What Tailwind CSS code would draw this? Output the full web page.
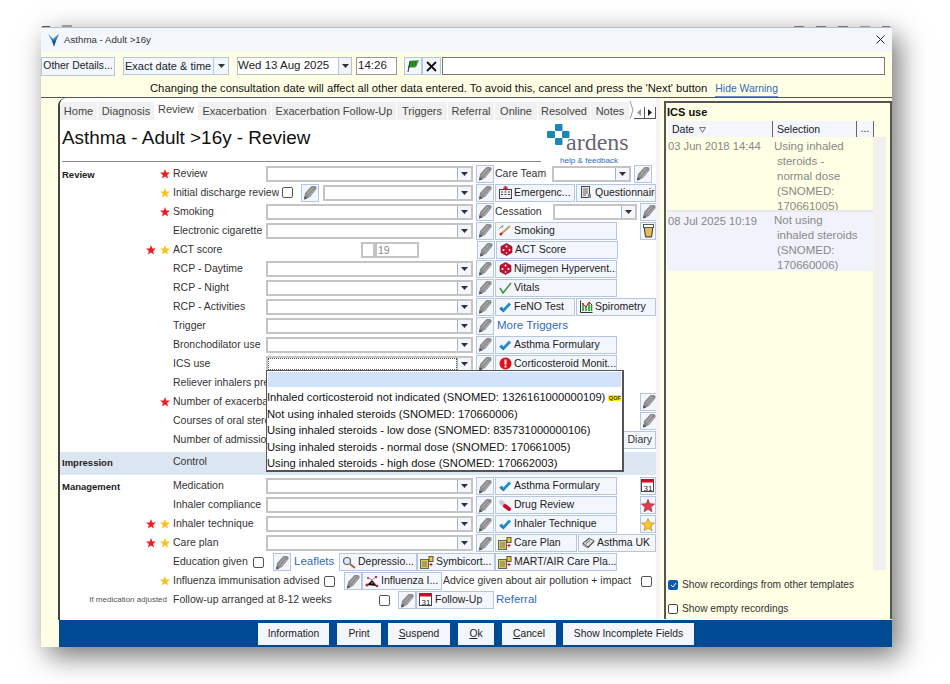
<!DOCTYPE html>
<html lang="en">
<head>
  <meta charset="UTF-8" />
  <title>Asthma - Adult >16y</title>
  <script src="https://cdn.jsdelivr.net/npm/@tailwindcss/browser@4"></script>
</head>
<body class="bg-white font-['Liberation_Sans',sans-serif] text-[10.5px] text-[#333]">
  <div class="w-[950px] h-[684px] pt-[25px] pl-[41px] overflow-hidden">
    <!-- Bits of the desktop showing above the window -->
    <div class="w-[851px] h-[2px] flex items-end">
      <span class="w-[8px] h-[1px] ml-[1px] bg-[#555]"></span>
      <span class="w-[10px] h-[2px] ml-[12px] bg-[#999]"></span>
      <span class="w-[10px] h-[1px] ml-auto bg-[#777]"></span>
      <span class="w-[10px] h-[1px] ml-[12px] bg-[#777]"></span>
      <span class="w-[10px] h-[1px] ml-[12px] bg-[#777]"></span>
      <span class="w-[10px] h-[1px] ml-[12px] bg-[#999]"></span>
      <span class="w-[8px] h-[1px] ml-[12px] mr-[2px] bg-[#777]"></span>
    </div>
    <div class="w-[851px] h-[620px] flex flex-col bg-[#ffffe6] shadow-[7px_9px_26px_rgba(0,0,0,0.55)] border-t border-[#bbb]">

      <!-- Title bar -->
      <div class="h-[24px] shrink-0 bg-[#f3f6fb] flex items-center pl-[6px] pr-[7px]">
        <svg width="14" height="15" viewBox="0 0 14 15"><path d="M1 1l5 5 6-5-3 7-2 6-2-6z" fill="#2f7fc4"/><path d="M5 7l2 1 2-1-2 6z" fill="#16508c"/></svg>
        <span class="ml-[3px] text-[9.7px] text-[#333]">Asthma - Adult &gt;16y</span>
        <svg class="ml-auto -mt-[2px]" width="9" height="9" viewBox="0 0 9 9"><path d="M0.5 0.5l8 8M8.5 0.5l-8 8" stroke="#222" stroke-width="1"/></svg>
      </div>

      <!-- Date toolbar -->
      <div class="h-[23px] shrink-0 flex items-center pt-[5px] text-[11.5px] text-[#222]">
        <div class="w-[74px] h-[19px] bg-[#f3f7ff] border border-[#b4c6e0] flex items-center justify-center text-[10.4px] whitespace-nowrap">Other Details...</div>
        <div class="ml-[8px] w-[106px] h-[18px] bg-[#f3f7ff] border border-[#b4c6e0] flex items-center pl-[1px] whitespace-nowrap text-[11px]">Exact date &amp; time
          <span class="ml-auto w-[15px] h-full border-l border-[#b4c6e0] flex items-center justify-center"><svg width="7" height="4"><path d="M0 0h7L3.5 4z" fill="#333"/></svg></span>
        </div>
        <div class="ml-[8px] w-[115px] h-[18px] bg-white border border-[#b8c0cc] flex items-center whitespace-nowrap">Wed 13 Aug 2025
          <span class="ml-auto w-[13px] h-full bg-[#f0f4fb] border-l border-[#b4c6e0] flex items-center justify-center"><svg width="7" height="4"><path d="M0 0h7L3.5 4z" fill="#333"/></svg></span>
        </div>
        <div class="ml-[4px] w-[41px] h-[18px] bg-white border border-[#999] flex items-center pl-[1px]">14:26</div>
        <div class="ml-[7px] w-[18px] h-[18px] bg-[#f3f7ff] border border-[#b4c6e0] flex items-center justify-center">
          <svg width="14" height="14" viewBox="0 0 14 14"><path d="M4 2c3-1 5 0 9-1l-3 7c-3 1-5 0-8 1z" fill="#2f9428"/><path d="M6 3l1 4M9 2l1 4" stroke="#0f5a10" stroke-width="0.7"/><path d="M4 2L2 13" stroke="#333" stroke-width="1"/></svg>
        </div>
        <div class="w-[19px] h-[18px] bg-[#f3f7ff] border border-[#b4c6e0] flex items-center justify-center">
          <svg width="11" height="11" viewBox="0 0 11 11"><path d="M1 1l9 9M10 1l-9 9" stroke="#111" stroke-width="1.8"/></svg>
        </div>
        <div class="ml-[1px] w-[443px] h-[18px] bg-white border border-[#777]"></div>
      </div>

      <!-- Warning -->
      <div class="h-[22px] shrink-0 flex items-center pl-[109px] pt-[5px] text-[11.25px] text-[#111]">
        <span class="whitespace-nowrap">Changing the consultation date will affect all other data entered. To avoid this, cancel and press the 'Next' button</span>
        <span class="ml-[8px] mt-[1px] text-[#2f6bc0] text-[10.4px] border-b border-[#5c8fd6] whitespace-nowrap">Hide Warning</span>
      </div>

      <!-- Main -->
      <div class="flex-1 min-h-0 flex border-t border-[#555]">
        <div class="w-[17px] shrink-0"></div>

        <!-- Left form panel -->
        <div class="w-[598px] shrink-0 flex flex-col bg-white border-l-2 border-[#444] rounded-tl-[8px] relative overflow-hidden">
          <div id="tabs" class="h-[20px] mt-[2px] shrink-0 flex items-end text-[#444] text-[11px] bg-white">
            <div class="h-[18px] w-[37px] bg-[#f1f1f1] flex items-center justify-center rounded-tl-[6px]">Home</div>
            <div class="h-[18px] w-[56px] ml-[1px] bg-[#f1f1f1] flex items-center justify-center">Diagnosis</div>
            <div class="h-[20px] w-[44px] bg-white flex items-center justify-center pb-[2px]">Review</div>
            <div class="h-[18px] w-[73px] bg-[#f1f1f1] flex items-center justify-center">Exacerbation</div>
            <div class="h-[18px] w-[124px] ml-[1px] bg-[#f1f1f1] flex items-center justify-center whitespace-nowrap">Exacerbation Follow-Up</div>
            <div class="h-[18px] w-[50px] ml-[1px] bg-[#f1f1f1] flex items-center justify-center">Triggers</div>
            <div class="h-[18px] w-[46px] ml-[1px] bg-[#f1f1f1] flex items-center justify-center">Referral</div>
            <div class="h-[18px] w-[42px] ml-[1px] bg-[#f1f1f1] flex items-center justify-center">Online</div>
            <div class="h-[18px] w-[52px] ml-[1px] bg-[#f1f1f1] flex items-center justify-center">Resolved</div>
            <div class="h-[18px] w-[38px] ml-[1px] bg-[#f1f1f1] flex items-center justify-center">Notes</div>
            <svg class="mb-[1px]" width="5" height="18" viewBox="0 0 5 18"><path d="M1 0l3 9-3 9" fill="none" stroke="#999"/></svg>
            <div class="h-[12px] w-[22px] mb-[1px] flex border-b border-r border-[#555] text-[#555]">
              <span class="flex-1 flex items-center justify-center border-r border-[#555]"><svg width="4" height="7"><path d="M4 0v7L0 3.5z" fill="#999"/></svg></span>
              <span class="flex-1 flex items-center justify-center"><svg width="4" height="7"><path d="M0 0v7l4-3.5z" fill="#222"/></svg></span>
            </div>
          </div>

          <!-- Heading and logo -->
          <div class="h-[45px] shrink-0 flex relative">
            <div class="w-[479px] ml-[2px] h-[42px] border-b border-[#888] text-[18.9px] text-[#111] pt-[6px] whitespace-nowrap leading-[24px]">Asthma - Adult &gt;16y - Review</div>
            <svg class="absolute left-[487px] top-[4px]" width="23" height="22" viewBox="0 0 23 22"><g fill="#1a87b8"><rect x="8" y="0" width="7.500" height="7" rx="1"/><rect x="0" y="7" width="8" height="7" rx="1"/><rect x="15" y="7" width="7.500" height="7" rx="1"/><rect x="8" y="14" width="7.500" height="7" rx="1"/></g></svg>
            <span class="absolute left-[506px] top-[9px] text-[24px] leading-[26px] text-[#667] font-['Liberation_Serif',serif]">ardens</span>
            <span class="absolute left-[500px] top-[36px] text-[8.1px] leading-[10px] text-[#2f6bc0] whitespace-nowrap">help &amp; feedback</span>
          </div>

          <!-- Form rows, filled in by the script below -->
          <div id="review" class="shrink-0 -mt-[1px]"></div>
          <div id="impression" class="h-[23px] mt-[2.5px] bg-[#dce6f2] flex items-center shrink-0">
            <b class="w-[113px] pl-[2px] text-[9.5px] text-[#222]">Impression</b><span class="-mt-[2px]">Control</span>
          </div>
          <div id="management" class="mt-[2px] shrink-0"></div>

          <!-- ICS use dropdown -->
          <div class="absolute left-[206px] top-[272px] w-[358px] h-[102px] bg-white border border-[#555] border-r-2 border-b-2 text-[11.2px] text-[#111] z-10 pt-[1px] whitespace-nowrap">
            <div class="h-[15px] mx-[1px] bg-[#d3e2fb] mb-[2px]"></div>
            <div class="h-[17px] flex items-center">Inhaled corticosteroid not indicated (SNOMED: 1326161000000109)<span class="ml-[3px] w-[13px] h-[6px] bg-[#fff200] text-[5.500px] leading-[6px] font-bold text-center text-[#333]">QOF</span></div>
            <div class="h-[16.5px] flex items-center">Not using inhaled steroids (SNOMED: 170660006)</div>
            <div class="h-[16.5px] flex items-center">Using inhaled steroids - low dose (SNOMED: 835731000000106)</div>
            <div class="h-[16.5px] flex items-center">Using inhaled steroids - normal dose (SNOMED: 170661005)</div>
            <div class="h-[16.5px] flex items-center">Using inhaled steroids - high dose (SNOMED: 170662003)</div>
          </div>
        </div>

        <div class="w-[4px] shrink-0 bg-[#f4f4f4]"></div>
        <div class="w-[4px] shrink-0"></div>

        <!-- Right history panel -->
        <div class="w-[228px] h-[518px] mt-[3px] flex flex-col border-2 border-[#555] border-b-0 bg-[#ffffe6] text-[#333]">
          <div class="h-[18px] shrink-0 pl-[1px] pt-[1px] font-bold text-[11px] text-[#111]">ICS use</div>
          <div class="h-[16px] shrink-0 flex bg-[#f3f6fc] ml-[2px] mr-[16px] items-center text-[#222]">
            <div class="w-[105px] h-full pl-[4px] pt-[1px] border-r border-[#666] flex items-center gap-[5px]">Date <svg width="7" height="6"><path d="M0.5 0.5h6L3.5 5.5z" fill="none" stroke="#777"/></svg></div>
            <div class="w-[84px] h-full pl-[4px] pt-[1px] border-r border-[#666] flex items-center">Selection</div>
            <div class="flex-1 h-full border-r border-[#666] flex items-center justify-center">...</div>
          </div>
          <div class="h-[433px] shrink-0 flex ml-[1px] text-[#888] text-[11.5px] leading-[15px]">
            <div class="w-[206px]">
              <div class="h-[73px] flex bg-[#ffffe6] overflow-hidden">
                <div class="w-[107px] pl-[1px] pt-[2px] text-[11.2px] whitespace-nowrap">03 Jun 2018 14:44</div>
                <div class="flex-1 pt-[2px]">Using inhaled<br /><span class="pl-[3px]">steroids -</span><br /><span class="pl-[3px]">normal dose</span><br /><span class="pl-[3px]">(SNOMED:</span><br /><span class="pl-[3px]">170661005)</span></div>
              </div>
              <div class="h-[2px] bg-[#e8e8e8]"></div>
              <div class="h-[59px] flex bg-[#f0f3fb] overflow-hidden">
                <div class="w-[107px] pl-[1px] pt-[2px] text-[11.2px] whitespace-nowrap">08 Jul 2025 10:19</div>
                <div class="flex-1 pt-[1px]">Not using<br /><span class="pl-[3px]">inhaled steroids</span><br /><span class="pl-[3px]">(SNOMED:</span><br /><span class="pl-[3px]">170660006)</span></div>
              </div>
            </div>
            <div class="w-[13px] bg-[#f0f0f0]"></div>
          </div>
          <div class="h-[24px] shrink-0 flex items-center pl-[2px] gap-[3px] pt-[6px] text-[10.2px]">
            <span class="w-[10px] h-[10px] bg-[#0a5bb5] rounded-[2px] flex items-center justify-center"><svg width="7" height="6"><path d="M1 3l2 2 3-4" stroke="#fff" fill="none"/></svg></span><span class="ml-[1px]">Show recordings from other templates</span>
          </div>
          <div class="h-[25px] shrink-0 flex items-center pl-[2px] pt-[5px] gap-[3px] text-[10.2px]">
            <span class="w-[10px] h-[10px] bg-white border border-[#444] rounded-[2px]"></span><span class="ml-[1px]">Show empty recordings</span>
          </div>
        </div>
      </div>

      <!-- Action bar -->
      <div class="h-[27px] shrink-0 ml-[18px] bg-[#004a94] flex items-center text-[10.3px] text-[#222] pl-[199px] pt-[1px]">
        <div class="w-[71px] h-[22px] bg-[#f3f6fc] flex items-center justify-center">Information</div>
        <div class="w-[44px] h-[22px] ml-[8px] bg-[#f3f6fc] flex items-center justify-center">Print</div>
        <div class="w-[62px] h-[22px] ml-[7px] bg-[#f3f6fc] flex items-center justify-center"><span><u>S</u>uspend</span></div>
        <div class="w-[36px] h-[22px] ml-[8px] bg-[#f3f6fc] flex items-center justify-center"><span><u>O</u>k</span></div>
        <div class="w-[54px] h-[22px] ml-[8px] bg-[#f3f6fc] flex items-center justify-center"><span><u>C</u>ancel</span></div>
        <div class="w-[131px] h-[22px] ml-[7px] bg-[#f3f6fc] flex items-center justify-center whitespace-nowrap">Show Incomplete Fields</div>
      </div>
    </div>
  </div>

  <script>
    // Small inline icons
    const icon = {
      check: `<svg width="13" height="12" viewBox="0 0 13 12"><path d="M1.500 6.500l3 3 6.500-7" fill="none" stroke="#1f8fd0" stroke-width="2.800"/><path d="M1 7.500l3 3" stroke="#15507a" stroke-width="1"/></svg>`,
      green: `<svg width="13" height="12" viewBox="0 0 13 12"><path d="M1 6l3 5 8-10" fill="none" stroke="#3c9a3c" stroke-width="1.6"/></svg>`,
      dice: `<svg width="13" height="13" viewBox="0 0 13 13"><path d="M6.5 0.5l5.5 3v6l-5.500 3-5.500-3v-6z" fill="#c8102e" stroke="#5a0a14" stroke-width="0.6"/><g fill="#fff"><circle cx="6.5" cy="3.5" r="1"/><circle cx="3.5" cy="7" r="1"/><circle cx="9.5" cy="7" r="1"/><circle cx="6.5" cy="10" r="0.8"/></g></svg>`,
      alert: `<svg width="13" height="13" viewBox="0 0 13 13"><circle cx="6.5" cy="6.5" r="6" fill="#e0101a"/><rect x="5.500" y="2.500" width="2" height="5" fill="#fff"/><rect x="5.500" y="8.500" width="2" height="2" fill="#fff"/></svg>`,
      smoke: `<svg width="14" height="13" viewBox="0 0 14 13"><path d="M2 11L12 2" stroke="#b9a25a" stroke-width="2"/><path d="M2 11l2-2" stroke="#c8102e" stroke-width="2"/><path d="M1 5l3-3M5 1l-1 3" stroke="#777" stroke-width="0.8"/></svg>`,
      hosp: `<svg width="13" height="13" viewBox="0 0 13 13"><rect x="0.5" y="3.5" width="12" height="9" fill="#eef2f8" stroke="#444"/><path d="M5 0.5h3v3H5z" fill="#fff" stroke="#444" stroke-width="0.5"/><path d="M6.500 0.500v4M4.500 2.500h4" stroke="#d01020" stroke-width="1.4"/><path d="M2 6h2M2 8.500h2M9 6h2M9 8.500h2M5.500 6h2M5.500 8.500h2" stroke="#345" stroke-width="1"/></svg>`,
      doc: `<svg width="11" height="13" viewBox="0 0 11 13"><rect x="0.5" y="0.5" width="8" height="11" fill="#e8e8e8" stroke="#444"/><path d="M2 3h5M2 5h5M2 7h5M2 9h3" stroke="#444" stroke-width="0.8"/><rect x="7" y="8" width="3" height="4" fill="#888"/></svg>`,
      spiro: `<svg width="13" height="13" viewBox="0 0 13 13"><path d="M0.500 0.500v12h12" fill="none" stroke="#333"/><path d="M3 11V3M6 11V6M9 11V3M11.500 11V5" stroke="#2a9a2a" stroke-width="1.6"/><path d="M2 3l4 4 3-5 3 3" fill="none" stroke="#d01020"/></svg>`,
      pill: `<svg width="14" height="13" viewBox="0 0 14 13"><path d="M3 3l4 4" stroke="#ccc" stroke-width="4" stroke-linecap="round"/><path d="M7 7l4 3" stroke="#c8102e" stroke-width="4" stroke-linecap="round"/></svg>`,
      plan: `<svg width="14" height="13" viewBox="0 0 14 13"><rect x="0.5" y="3.5" width="8" height="9" fill="#d8c860" stroke="#665"/><path d="M2 6h5M2 8h5M2 10h5" stroke="#665" stroke-width="0.8"/><rect x="9" y="0.5" width="4" height="5" fill="#f4d020" stroke="#554"/><path d="M11 7v3M9.500 8.500h3" stroke="#c8102e"/></svg>`,
      book: `<svg width="13" height="12" viewBox="0 0 13 12"><path d="M1 6l6-5 5 3-6 6z" fill="#ddd" stroke="#555"/><path d="M1 6v2l5 3 6-6V4M3 5l4-3M4 6.500l4-3" fill="none" stroke="#555" stroke-width="0.8"/></svg>`,
      lens: `<svg width="14" height="13" viewBox="0 0 14 13"><circle cx="5" cy="5" r="3.5" fill="#dbe8f7" stroke="#666" stroke-width="1.2"/><path d="M8 8l5 4" stroke="#a56a2a" stroke-width="2"/></svg>`,
      virus: `<svg width="14" height="13" viewBox="0 0 14 13"><path d="M2 10l5-5 5 6M7 5l4-3M7 5L3 3" stroke="#888" stroke-width="0.8"/><g fill="#c8202e"><circle cx="2" cy="10" r="1.5"/><circle cx="12" cy="11" r="1.3"/><circle cx="11" cy="2" r="1.2"/><circle cx="3" cy="3" r="1"/><circle cx="7" cy="8" r="1.2"/></g></svg>`,
      cal: `<svg width="14" height="14" viewBox="0 0 14 14"><rect x="0.5" y="0.5" width="12" height="12" fill="#fff" stroke="#444"/><rect x="0.5" y="0.5" width="12" height="3" fill="#d01020"/><text x="2.5" y="11.5" font-size="8" font-family="Liberation Sans" fill="#223">31</text></svg>`,
      cup: `<svg width="11" height="14" viewBox="0 0 11 14"><path d="M1 2h9l-1.500 11h-6z" fill="#e5b95c" stroke="#333"/><rect x="0.5" y="0.5" width="10" height="3" fill="#fff" stroke="#333" stroke-width="0.8"/></svg>`,
      redstar: `<svg width="15" height="15" viewBox="0 0 15 15"><path d="M7.500 1l2 4.500 5 .5-3.800 3.300 1.100 4.900-4.300-2.600-4.300 2.600 1.100-4.900L.5 6l5-.5z" fill="#d8404e" stroke="#903040" stroke-width="0.7"/></svg>`,
      yellowstar: `<svg width="15" height="15" viewBox="0 0 15 15"><path d="M7.500 1l2 4.500 5 .5-3.800 3.300 1.100 4.900-4.300-2.600-4.300 2.600 1.100-4.900L.5 6l5-.5z" fill="#fcc52c" stroke="#b08820" stroke-width="0.7"/></svg>`,
    };

    const star = (c) => `<svg width="10" height="10" viewBox="0 0 10 10"><path d="M5 0l1.300 3.400 3.700.2-2.900 2.300 1 3.600L5 7.500 1.900 9.500l1-3.600L0 3.600l3.700-.2z" fill="${c}"/></svg>`;
    const red = star("#ee1c25");
    const gold = star("#fcc01e");

    const combo = (w, focused) => `<div class="${w} h-[16px] shrink-0 bg-white border-2 border-[#c4c4c4] flex justify-end">
      ${focused ? `<div class="flex-1 border border-dotted border-[#555]"></div>` : ""}
      <span class="w-[14px] bg-[#f3f6fc] border-l border-[#9db4d6] flex items-center justify-center"><svg width="7" height="4"><path d="M0 0h7L3.5 4z" fill="#333"/></svg></span></div>`;

    const pencil = (cls = "") => `<div class="${cls} w-[18px] h-[18px] shrink-0 bg-[#f3f6fc] border border-[#b4c6e0] flex items-center justify-center">
      <svg width="14" height="15" viewBox="0 0 14 15"><path d="M1 14.500L2 8l6.500-7h3c1.500 0 2.500 1 2 3L7 12z" fill="#8c8c8c"/><path d="M1 14.500l.6-3.500 2.900 2.500z" fill="#555"/><path d="M4 9.500l6-7M6 11l5.500-6.500" stroke="#c8c8c8" stroke-width="0.7"/></svg></div>`;

    const btn = (w, ic, text, cls = "") => `<div class="${w} ${cls} h-[18px] shrink-0 bg-[#f3f6fc] border border-[#b4c6e0] flex items-center pl-[2px] gap-[2px] whitespace-nowrap overflow-hidden text-[#222]"><span class="w-[14px] flex justify-center shrink-0">${ic}</span>${text}</div>`;

    const box = (cls = "") => `<span class="${cls} w-[11px] h-[11px] shrink-0 bg-white border border-[#555] rounded-[2px]"></span>`;

    // section: bold label on the far left, stars: right-aligned marks, then label, then controls
    const row = (section, stars, label, controls, labelW = "w-[93px]") => `
      <div class="h-[19px] flex items-center">
        <b class="w-[85px] pl-[2px] pt-[3px] shrink-0 text-[9.500px] text-[#222]">${section}</b>
        <span class="w-[28px] shrink-0 flex justify-end gap-[4px] pr-[3px]">${stars.join("")}</span>
        <span class="${labelW} shrink-0 overflow-hidden whitespace-nowrap">${label}</span>
        ${controls}
      </div>`;

    const field = (w = "w-[207px]") => combo(w) + pencil("ml-[3px]");
    const main = (ic, text) => field() + btn("w-[122px]", ic, text, "ml-[1px]");
    const extra = (inner) => `<div class="w-[16px] h-[18px] ml-[23px] bg-[#f3f6fc] border border-[#b4c6e0] flex items-center justify-center overflow-hidden shrink-0">${inner}</div>`;
    const far = () => `<div class="ml-auto w-[16px] overflow-hidden shrink-0">${pencil()}</div>`;

    document.getElementById("review").innerHTML = [
      row("Review", [red], "Review", field() + `<span class="w-[57px] ml-[1px] shrink-0 whitespace-nowrap">Care Team</span>` + combo("w-[79px]") + pencil("ml-[3px]")),
      row("", [gold], "Initial discharge review", box("ml-[3px]") + pencil("ml-[8px]") + combo("w-[150px] ml-[4px]") + pencil("ml-[3px]") + btn("w-[80px]", icon.hosp, "Emergenc...", "ml-[1px]") + btn("w-[80px]", icon.doc, "Questionnaire", "ml-[1px]"), "w-[106px]"),
      row("", [red], "Smoking", field() + `<span class="w-[58px] ml-[1px] shrink-0">Cessation</span>` + combo("w-[84px]") + pencil("ml-[3px]")),
      row("", [], "Electronic cigarette", main(icon.smoke, "Smoking") + extra(icon.cup)),
      row("", [red, gold], "ACT score", `<div class="ml-[95px] w-[14px] h-[16px] bg-white border-2 border-[#c4c4c4] shrink-0"></div><div class="w-[44px] h-[16px] bg-white border-2 border-[#c4c4c4] shrink-0 text-[#888] pl-[1px] leading-[12px]">19</div>` + pencil("ml-[58px]") + btn("w-[122px]", icon.dice, "ACT Score", "ml-[1px]")),
      row("", [], "RCP - Daytime", main(icon.dice, "Nijmegen Hypervent...")),
      row("", [], "RCP - Night", main(icon.green, "Vitals")),
      row("", [], "RCP - Activities", field() + btn("w-[80px]", icon.check, "FeNO Test", "ml-[1px]") + btn("w-[80px]", icon.spiro, "Spirometry", "ml-[1px]")),
      row("", [], "Trigger", field() + `<span class="ml-[3px] text-[#2f6bc0] text-[11.5px] whitespace-nowrap">More Triggers</span>`),
      row("", [], "Bronchodilator use", main(icon.check, "Asthma Formulary")),
      row("", [], "ICS use", combo("w-[207px]", true) + pencil("ml-[3px]") + btn("w-[122px]", icon.alert, "Corticosteroid Monit...", "ml-[1px]")),
      row("", [], "Reliever inhalers prescribed", ""),
      row("", [red], "Number of exacerbations", far()),
      row("", [], "Courses of oral steroids", far()),
      row("", [], "Number of admissions", `<div class="ml-auto w-[60px] h-[18px] bg-[#f3f6fc] border border-[#b4c6e0] flex items-center justify-end pr-[3px] whitespace-nowrap overflow-hidden">PEFR Diary</div>`),
    ].join("");

    document.getElementById("management").innerHTML = [
      row("Management", [], "Medication", main(icon.check, "Asthma Formulary") + extra(icon.cal)),
      row("", [], "Inhaler compliance", main(icon.pill, "Drug Review") + extra(icon.redstar)),
      row("", [red, gold], "Inhaler technique", main(icon.check, "Inhaler Technique") + extra(icon.yellowstar)),
      row("", [red, gold], "Care plan", field() + btn("w-[82px]", icon.plan, "Care Plan", "ml-[1px]") + btn("w-[78px]", icon.book, "Asthma UK", "ml-[1px]")),
      row("", [], "Education given", box("-ml-[13px]") + pencil("ml-[9px]") + `<span class="ml-[3px] w-[45px] shrink-0 text-[#2f6bc0] text-[11.5px]">Leaflets</span>` + btn("w-[78px]", icon.lens, "Depressio...") + btn("w-[78px]", icon.plan, "Symbicort...") + btn("w-[122px]", icon.plan, "MART/AIR Care Pla...")),
      row("", [gold], "Influenza immunisation advised", box("-ml-[5px]") + pencil("ml-[9px]") + btn("w-[80px]", icon.virus, "Influenza I...") + `<span class="ml-[1px] w-[198px] shrink-0 whitespace-nowrap">Advice given about air pollution + impact</span>` + box(), "w-[156px]"),
      `<div class="h-[19px] flex items-center">
        <span class="w-[110px] shrink-0 text-right pr-[3px] text-[8px] text-[#555] whitespace-nowrap">If medication adjusted</span>
        <span class="ml-[3px] w-[206px] shrink-0 whitespace-nowrap">Follow-up arranged at 8-12 weeks</span>
        ${box()}${pencil("ml-[8px]")}${btn("w-[78px]", icon.cal, "Follow-Up")}<span class="ml-[2px] text-[#2f6bc0] text-[11.5px]">Referral</span>
      </div>`,
    ].join("");
  </script>
</body>
</html>
